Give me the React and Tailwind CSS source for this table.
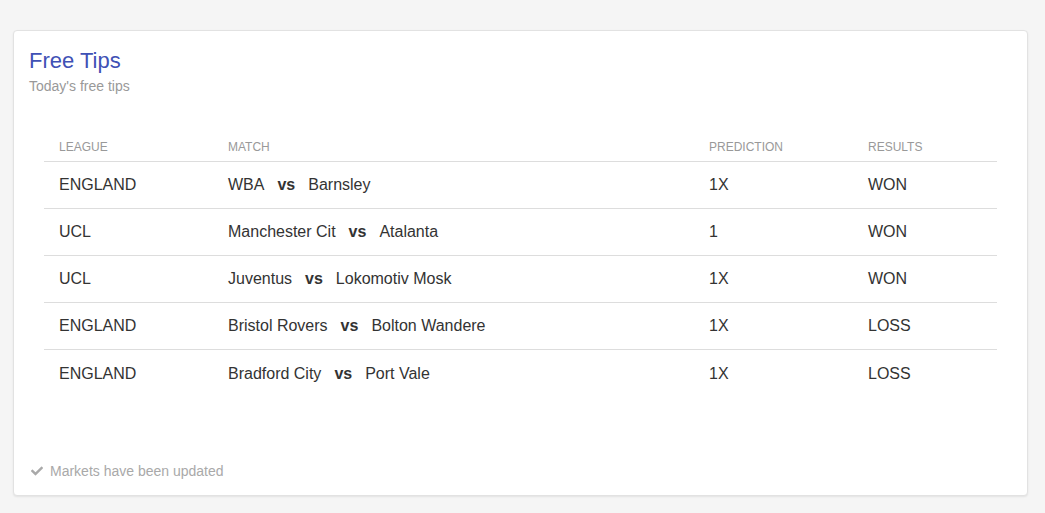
import { FaCheck } from 'react-icons/fa';

const tips = [
  { league: 'ENGLAND', home: 'WBA', away: 'Barnsley', prediction: '1X', result: 'WON' },
  { league: 'UCL', home: 'Manchester Cit', away: 'Atalanta', prediction: '1', result: 'WON' },
  { league: 'UCL', home: 'Juventus', away: 'Lokomotiv Mosk', prediction: '1X', result: 'WON' },
  { league: 'ENGLAND', home: 'Bristol Rovers', away: 'Bolton Wandere', prediction: '1X', result: 'LOSS' },
  { league: 'ENGLAND', home: 'Bradford City', away: 'Port Vale', prediction: '1X', result: 'LOSS' },
];

const cols = 'grid grid-cols-[169px_481px_159px_1fr]';

export default function App() {
  return (
    <div
      className="min-h-screen bg-[#f5f5f5] pt-[30px] pl-[13px] pr-[17px] pb-[17px]"
      style={{ fontFamily: '"Liberation Sans", Arial, sans-serif' }}
    >
      <div className="bg-white border border-[#e2e2e2] rounded-[4px] shadow-[0_1px_2px_rgba(0,0,0,0.08)] h-[466px] flex flex-col">
        <div className="pt-[17px] px-[15px]">
          <h4 className="text-[22px] leading-[26px] text-[#3f51b5]">Free Tips</h4>
          <p className="mt-[2px] text-[14px] leading-[20px] text-[#999999]">Today's free tips</p>
        </div>

        <div className="mt-[35px] px-[30px]">
          <div className={`${cols} h-[31px] border-b border-[#dddddd] text-[12px] leading-[16px] text-[#999999] uppercase`}>
            <div className="pl-[15px] pt-[8px]">League</div>
            <div className="pl-[15px] pt-[8px]">Match</div>
            <div className="pl-[15px] pt-[8px]">Prediction</div>
            <div className="pl-[15px] pt-[8px]">Results</div>
          </div>
          {tips.map((t, i) => (
            <div
              key={i}
              className={`${cols} h-[47px] items-center text-[16px] text-[#333333] ${i < tips.length - 1 ? 'border-b border-[#dddddd]' : ''}`}
            >
              <div className="pl-[15px]">{t.league}</div>
              <div className="pl-[15px]">
                {t.home}
                <b className="mx-[13px] font-bold">vs</b>
                {t.away}
              </div>
              <div className="pl-[15px]">{t.prediction}</div>
              <div className="pl-[15px]">{t.result}</div>
            </div>
          ))}
        </div>

        <div className="mt-auto mb-[14px] px-[17px] flex items-center gap-[7px] text-[14px] leading-[20px] text-[#a9a9a9]">
          <FaCheck className="w-[12px] h-[12px]" />
          <span>Markets have been updated</span>
        </div>
      </div>
    </div>
  );
}
